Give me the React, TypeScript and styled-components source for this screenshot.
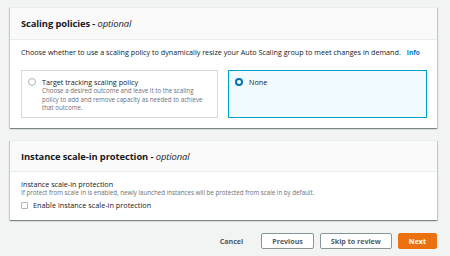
import React, { useState } from 'react'
import styled, { createGlobalStyle } from 'styled-components'

const GlobalStyle = createGlobalStyle`
  html, body {
    margin: 0;
    padding: 0;
    background: #f2f3f3;
  }
  body {
    font-family: 'Open Sans', 'Liberation Sans', Arial, sans-serif;
    color: #16191f;
    -webkit-font-smoothing: antialiased;
  }
`

const Page = styled.main`
  width: 450px;
  height: 256px;
  box-sizing: border-box;
  padding: 7px 13px 0 10px;
  display: flex;
  flex-direction: column;
  gap: 12px;
`
const Card = styled.section`
  background: #fff;
  box-shadow: 0 1px 1px 0 rgba(0, 28, 36, 0.3), 1px 1px 1px 0 rgba(0, 28, 36, 0.15),
    -1px 1px 1px 0 rgba(0, 28, 36, 0.15);
  border-top: 1px solid #eaeded;
`
const CardHeader = styled.header<{ $height: number }>`
  height: ${(p) => p.$height}px;
  box-sizing: border-box;
  display: flex;
  align-items: center;
  padding: 0 11px;
  background: #fafafa;
  border-bottom: 1px solid #eaeded;
`
const Title = styled.h2`
  margin: 0;
  font-size: 9.4px;
  font-weight: 700;
  letter-spacing: -0.1px;
  em {
    font-weight: 400;
    font-style: italic;
  }
`
const CardBody = styled.div<{ $pad: string }>`
  padding: ${(p) => p.$pad};
`
const Lead = styled.p`
  margin: 0 0 12px;
  font-size: 7.2px;
  line-height: 10px;
  display: flex;
  gap: 6px;
  align-items: baseline;
`
const InfoLink = styled.a`
  color: #0073bb;
  font-weight: 700;
  font-size: 6.5px;
  text-decoration: none;
`
const Tiles = styled.div`
  display: grid;
  grid-template-columns: 197px 199px;
  gap: 10px;
`
const Tile = styled.label<{ $selected: boolean }>`
  height: 48px;
  box-sizing: border-box;
  display: flex;
  gap: 6px;
  padding: 7px 6px;
  border: 1px solid ${(p) => (p.$selected ? '#00a1c9' : '#d5dbdb')};
  background: ${(p) => (p.$selected ? '#f1faff' : '#fff')};
  cursor: pointer;
`
const Radio = styled.span<{ $checked: boolean }>`
  flex: none;
  width: 8px;
  height: 8px;
  box-sizing: border-box;
  border-radius: 50%;
  border: ${(p) => (p.$checked ? '2.5px solid #0073bb' : '1px solid #aab7b8')};
  background: #fff;
`
const TileText = styled.div`
  display: flex;
  flex-direction: column;
  max-width: 168px;
`
const TileLabel = styled.span`
  font-size: 7.2px;
  line-height: 9px;
`
const TileDesc = styled.span`
  font-size: 6.2px;
  line-height: 8.5px;
  color: #687078;
`
const FieldLabel = styled.div`
  font-size: 7.2px;
  line-height: 9px;
`
const FieldDesc = styled.div`
  font-size: 6.2px;
  line-height: 8px;
  color: #687078;
`
const CheckRow = styled.label`
  display: flex;
  align-items: center;
  gap: 5px;
  margin-top: 3px;
  font-size: 7.3px;
  line-height: 10px;
  cursor: pointer;
`
const Box = styled.span<{ $checked: boolean }>`
  width: 7px;
  height: 7px;
  box-sizing: border-box;
  border: 1px solid #aab7b8;
  border-radius: 1px;
  background: ${(p) => (p.$checked ? '#0073bb' : '#fff')};
`
const Actions = styled.footer`
  display: flex;
  justify-content: flex-end;
  align-items: center;
  gap: 6px;
  margin-top: 1px;
`
const Button = styled.button<{ $variant: 'link' | 'normal' | 'primary' }>`
  height: 16px;
  box-sizing: border-box;
  padding: 0 ${(p) => (p.$variant === 'link' ? '9px' : '10px')};
  margin-right: ${(p) => (p.$variant === 'link' ? '2px' : '0')};
  font-family: inherit;
  font-size: 7.1px;
  font-weight: 700;
  border-radius: 2px;
  cursor: pointer;
  color: ${(p) => (p.$variant === 'primary' ? '#fff' : '#545b64')};
  background: ${(p) =>
    p.$variant === 'primary' ? '#ec7211' : p.$variant === 'normal' ? '#fff' : 'transparent'};
  border: 1px solid
    ${(p) =>
      p.$variant === 'primary' ? '#ec7211' : p.$variant === 'normal' ? '#879596' : 'transparent'};
`

export default function App() {
  const [policy, setPolicy] = useState<'target' | 'none'>('none')
  const [protect, setProtect] = useState(false)

  return (
    <>
      <GlobalStyle />
      <Page>
        <Card>
          <CardHeader $height={32}>
            <Title>
              Scaling policies - <em>optional</em>
            </Title>
          </CardHeader>
          <CardBody $pad='7px 10px 10px 11px'>
            <Lead>
              Choose whether to use a scaling policy to dynamically resize your Auto Scaling group
              to meet changes in demand.
              <InfoLink href='#'>Info</InfoLink>
            </Lead>
            <Tiles>
              <Tile $selected={policy === 'target'} onClick={() => setPolicy('target')}>
                <Radio $checked={policy === 'target'} />
                <TileText>
                  <TileLabel>Target tracking scaling policy</TileLabel>
                  <TileDesc>
                    Choose a desired outcome and leave it to the scaling policy to add and remove
                    capacity as needed to achieve that outcome.
                  </TileDesc>
                </TileText>
              </Tile>
              <Tile $selected={policy === 'none'} onClick={() => setPolicy('none')}>
                <Radio $checked={policy === 'none'} />
                <TileText>
                  <TileLabel>None</TileLabel>
                </TileText>
              </Tile>
            </Tiles>
          </CardBody>
        </Card>
        <Card>
          <CardHeader $height={31}>
            <Title>
              Instance scale-in protection - <em>optional</em>
            </Title>
          </CardHeader>
          <CardBody $pad='8px 11px 10px'>
            <FieldLabel>Instance scale-in protection</FieldLabel>
            <FieldDesc>
              If protect from scale in is enabled, newly launched instances will be protected from
              scale in by default.
            </FieldDesc>
            <CheckRow onClick={() => setProtect(!protect)}>
              <Box $checked={protect} />
              Enable instance scale-in protection
            </CheckRow>
          </CardBody>
        </Card>
        <Actions>
          <Button $variant='link'>Cancel</Button>
          <Button $variant='normal'>Previous</Button>
          <Button $variant='normal'>Skip to review</Button>
          <Button $variant='primary'>Next</Button>
        </Actions>
      </Page>
    </>
  )
}
